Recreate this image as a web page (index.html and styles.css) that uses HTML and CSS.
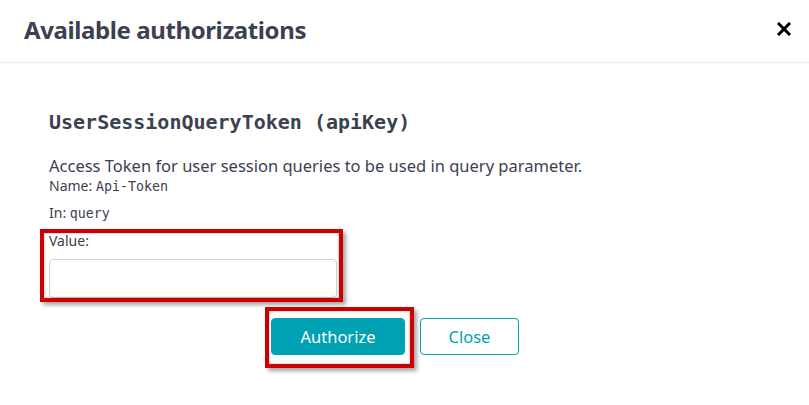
FILE: index.html
```html
<!DOCTYPE html>
<html>
<head>
<meta charset="utf-8">
<link rel="stylesheet" href="styles.css">
</head>
<body>
<div class="modal">
  <div class="modal-header">
    <h3 class="modal-title">Available authorizations</h3>
    <button class="close-x" aria-label="Close">
      <svg width="14" height="14" viewBox="0 0 14 14"><path d="M2 2 L12 12 M12 2 L2 12" stroke="#000" stroke-width="3" stroke-linecap="square"/></svg>
    </button>
  </div>
  <div class="modal-body">
    <h4 class="scheme-title">UserSessionQueryToken (apiKey)</h4>
    <p class="desc">Access Token for user session queries to be used in query parameter.</p>
    <p class="meta">Name: <code>Api-Token</code></p>
    <p class="meta">In: <code>query</code></p>
    <div class="value-wrap">
      <label class="value-label">Value:</label>
      <input class="value-input" type="text">
      <span class="annot annot-value"></span>
    </div>
    <div class="actions">
      <div class="auth-wrap">
        <button class="btn btn-primary">Authorize</button>
        <span class="annot annot-btn"></span>
      </div>
      <button class="btn btn-outline">Close</button>
    </div>
  </div>
</div>
</body>
</html>
```
FILE: styles.css
```css
* { box-sizing: border-box; }
html, body { margin: 0; padding: 0; background: #fff; }
body {
  font-family: "Noto Sans", "Open Sans", sans-serif;
  color: #3b4151;
  width: 809px;
  height: 405px;
  overflow: hidden;
}
.modal-header {
  display: flex;
  align-items: center;
  justify-content: space-between;
  height: 63px;
  border-bottom: 1px solid #ebebeb;
  padding: 0 18px 4px 24px;
}
.modal-title {
  margin: 0;
  font-size: 24px;
  font-weight: 700;
  letter-spacing: -0.4px;
  color: #3b4151;
}
.close-x {
  border: 0;
  background: none;
  padding: 0;
  width: 14px;
  height: 14px;
  display: flex;
}
.modal-body {
  padding: 46px 0 0 49px;
}
.scheme-title {
  margin: 0;
  font-family: "DejaVu Sans Mono", monospace;
  font-size: 20px;
  font-weight: 700;
  line-height: 26px;
  color: #3b4151;
}
.desc {
  margin: 19px 0 0;
  font-size: 16.5px;
  line-height: 23px;
  color: #3b4151;
}
.meta {
  margin: 0;
  font-size: 14px;
  line-height: 18px;
  color: #3b4151;
}
.meta + .meta { margin-top: 8px; }
.meta code {
  font-family: "DejaVu Sans Mono", monospace;
  font-size: 13.3px;
}
.value-wrap {
  position: relative;
  width: 288px;
  margin-top: 4px;
}
.value-label {
  display: block;
  font-size: 14px;
  line-height: 18px;
  padding-top: 5px;
}
.value-input {
  display: block;
  margin-top: 9px;
  width: 288px;
  height: 39px;
  border: 1px solid #d0d0d0;
  border-radius: 4px;
  background: #fff;
}
.annot {
  position: absolute;
  border: 4px solid #cc0000;
  box-shadow: 3px 3px 4px rgba(0,0,0,0.35), inset 0 0 3px rgba(0,0,0,0.35);
  pointer-events: none;
}
.annot-value {
  left: -9px;
  top: 2px;
  width: 303px;
  height: 73px;
}
.actions {
  display: flex;
  align-items: center;
  gap: 15px;
  margin-top: 20px;
  padding-left: 222px;
}
.auth-wrap { position: relative; display: flex; }
.annot-btn {
  left: -6px;
  top: -11px;
  width: 149px;
  height: 61px;
}
.btn {
  height: 37px;
  border-radius: 4px;
  font-family: "Noto Sans", "Open Sans", sans-serif;
  font-size: 16.5px;
  padding: 0;
}
.btn-primary {
  width: 134px;
  background: #00a1b2;
  border: 1px solid #00a1b2;
  color: #fff;
}
.btn-outline {
  width: 99px;
  background: #fff;
  border: 1px solid #00a1b2;
  color: #00a1b2;
}
```
